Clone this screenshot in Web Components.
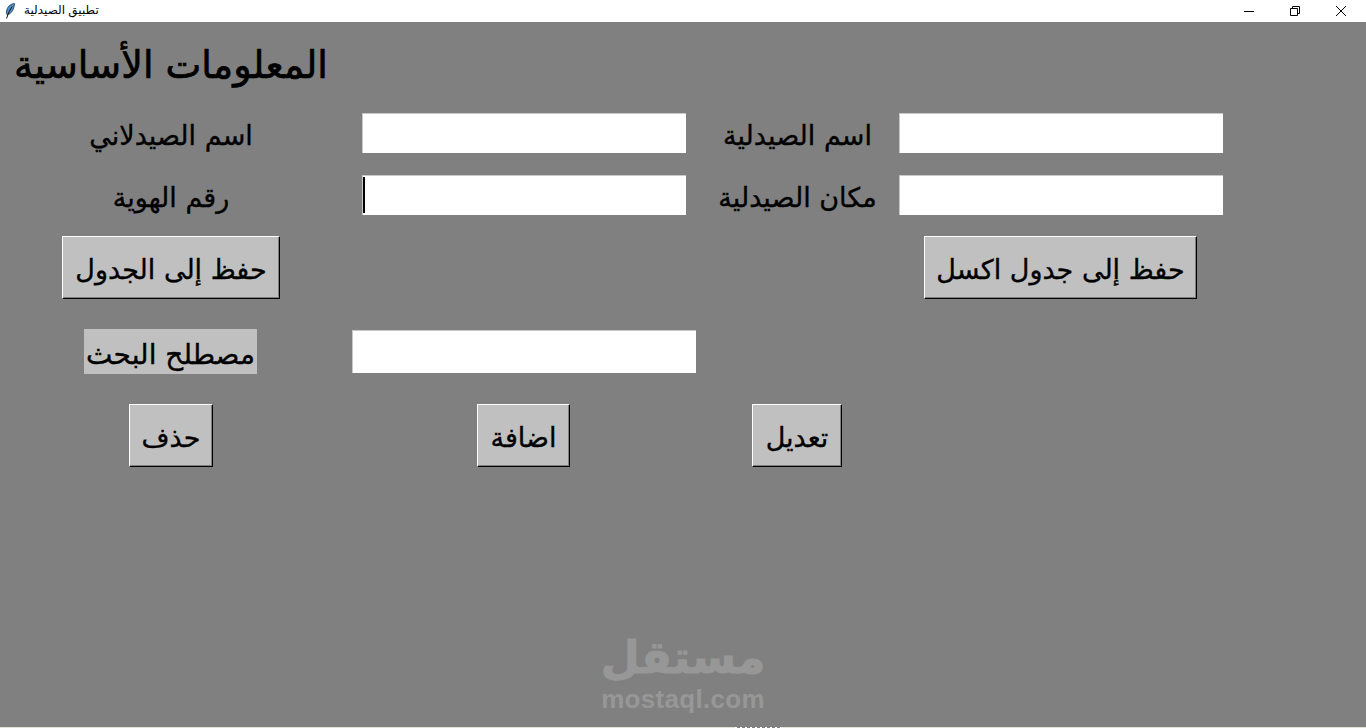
<!DOCTYPE html>
<html lang="ar">
<head>
<meta charset="utf-8">
<title>تطبيق الصيدلية</title>
<style>
    html, body { margin: 0; height: 100%; overflow: hidden; background: #808080; }
    body { font-family: "DejaVu Sans", sans-serif; }
</style>
</head>
<body>
<win-app>
    <win-titlebar slot="bar">تطبيق الصيدلية</win-titlebar>

    <pharmacy-form>
        <tk-label class="title" big>المعلومات الأساسية</tk-label>

        <tk-label class="c0 r1">اسم الصيدلاني</tk-label>
        <tk-entry class="c1 r1"></tk-entry>
        <tk-label class="c2 r1">اسم الصيدلية</tk-label>
        <tk-entry class="c3 r1"></tk-entry>

        <tk-label class="c0 r2">رقم الهوية</tk-label>
        <tk-entry class="c1 r2" focused></tk-entry>
        <tk-label class="c2 r2">مكان الصيدلية</tk-label>
        <tk-entry class="c3 r2"></tk-entry>

        <tk-button class="c0 r3" style="--w:218px">حفظ إلى الجدول</tk-button>
        <tk-button class="c3 r3" style="--w:273px;margin-left:-1px">حفظ إلى جدول اكسل</tk-button>

        <tk-label class="c0 r4" filled>مصطلح البحث</tk-label>
        <tk-entry class="c1 r4" wide></tk-entry>

        <tk-button class="c0 r5" style="--w:84px">حذف</tk-button>
        <tk-button class="c1 r5" style="--w:93px;margin-left:-1px">اضافة</tk-button>
        <tk-button class="c2 r5" style="--w:90px;margin-left:-1px">تعديل</tk-button>
    </pharmacy-form>

    <mostaql-mark slot="mark"></mostaql-mark>
</win-app>

<script>
// window shell: title bar on top, client area below, status sliver at the bottom
class WinApp extends HTMLElement {
    constructor() {
        super();
        this.attachShadow({ mode: 'open' });
        this.shadowRoot.innerHTML = `
            <style>
                :host { display: flex; flex-direction: column; height: 728px; position: relative; background: #808080; }
                .client { flex: 1; min-height: 0; }
                .edge { height: 1px; background: #e4e2d8; display: flex; }
                .edge i {
                    width: 46px;
                    margin-left: 735px;
                    background: repeating-linear-gradient(90deg, #fff 0 2px, #808080 2px 5px);
                }
            </style>
            <slot name="bar"></slot>
            <div class="client"><slot></slot></div>
            <slot name="mark"></slot>
            <div class="edge"><i></i></div>
        `;
    }
}

class WinTitlebar extends HTMLElement {
    constructor() {
        super();
        this.attachShadow({ mode: 'open' });
        this.shadowRoot.innerHTML = `
            <style>
                :host {
                    display: flex;
                    align-items: center;
                    height: 22px;
                    padding-right: 2px;
                    background: #fff;
                    color: #000;
                    font: 12px "Liberation Sans", "DejaVu Sans", sans-serif;
                }
                .icon { width: 10px; height: 16px; margin: 0 9px 0 5px; flex: none; }
                .text { direction: rtl; position: relative; top: -1px; }
                .spacer { flex: 1; }
                .btn { width: 46px; height: 22px; display: flex; align-items: center; justify-content: center; flex: none; }
                svg { display: block; }
            </style>
            <svg class="icon" viewBox="0 0 10 16">
                <path d="M9.5 .6C5.5 .8 2.2 3.8 1.5 8.2 1.3 9.8 1.5 11 2.2 11.8 6.5 11 9.2 6 9.5 .6Z" fill="#4f8fc8" stroke="#1c3350" stroke-width=".8"/>
                <path d="M7.2 3.5C5 6.5 3 10.5 1.6 15.5" fill="none" stroke="#111" stroke-width="1"/>
            </svg>
            <span class="text"><slot></slot></span>
            <span class="spacer"></span>
            <span class="btn"><svg width="10" height="10" viewBox="0 0 10 10"><path d="M0 5.5H10" stroke="#000"/></svg></span>
            <span class="btn"><svg width="10" height="10" viewBox="0 0 10 10" fill="none" stroke="#000"><path d="M.5 2.5H7.5V9.5H.5Z"/><path d="M2.5 2.5V.5H9.5V7.5H7.5"/></svg></span>
            <span class="btn"><svg width="10" height="10" viewBox="0 0 10 10"><path d="M0 0L10 10M10 0L0 10" stroke="#000" stroke-width="1"/></svg></span>
        `;
    }
}

// the grid of the form; rows and columns follow the Tk grid of the original
class PharmacyForm extends HTMLElement {
    constructor() {
        super();
        this.attachShadow({ mode: 'open' });
        this.shadowRoot.innerHTML = `
            <style>
                :host {
                    display: grid;
                    grid-template-columns: 342px 364px 183px 344px;
                    grid-template-rows: 86px 50px 74px 71px 97px 71px;
                    justify-content: start;
                    align-content: start;
                    place-items: center;
                }
            </style>
            <slot></slot>
        `;
    }
    connectedCallback() {
        const cols = { c0: 1, c1: 2, c2: 3, c3: 4 };
        const rows = { title: 1, r1: 2, r2: 3, r3: 4, r4: 5, r5: 6 };
        for (const el of this.children) {
            el.classList.forEach(name => {
                if (cols[name]) el.style.gridColumn = cols[name];
                if (rows[name]) el.style.gridRow = rows[name];
            });
            if (el.classList.contains('title')) el.style.gridColumn = 1;
        }
    }
}

class TkLabel extends HTMLElement {
    constructor() {
        super();
        this.attachShadow({ mode: 'open' });
        this.shadowRoot.innerHTML = `
            <style>
                :host {
                    display: block;
                    direction: rtl;
                    white-space: nowrap;
                    color: #000;
                    font-size: 27px;
                    line-height: 40px;
                    padding-top: 6px;
                    -webkit-text-stroke: .35px #000;
                }
                :host([big]) { font-size: 38px; line-height: 40px; padding-top: 0; -webkit-text-stroke: .7px #000; }
                :host([filled]) {
                    background: #c0c0c0;
                    font-size: 28px;
                    width: 173px;
                    height: 45px;
                    line-height: 51px;
                    padding-top: 0;
                    margin-left: -1px;
                    text-align: center;
                }
            </style>
            <slot></slot>
        `;
    }
}

class TkEntry extends HTMLElement {
    constructor() {
        super();
        this.attachShadow({ mode: 'open' });
        this.shadowRoot.innerHTML = `
            <style>
                :host {
                    display: block;
                    box-sizing: border-box;
                    width: 324px;
                    height: 40px;
                    background: #fff;
                    border-top: 1px solid #c8c8c8;
                    border-left: 1px solid #c8c8c8;
                }
                :host([wide]) { width: 344px; height: 43px; }
                .caret { display: none; width: 2px; height: 36px; margin: 1px 0 0 0; background: #000; }
                :host([focused]) .caret { display: block; }
            </style>
            <div class="caret"></div>
        `;
    }
}

class TkButton extends HTMLElement {
    constructor() {
        super();
        this.attachShadow({ mode: 'open' });
        this.shadowRoot.innerHTML = `
            <style>
                :host {
                    display: flex;
                    align-items: center;
                    justify-content: center;
                    box-sizing: border-box;
                    width: var(--w, 100px);
                    height: 63px;
                    direction: rtl;
                    white-space: nowrap;
                    color: #000;
                    background: #c0c0c0;
                    font-size: 27px;
                    -webkit-text-stroke: .35px #000;
                    border-top: 1px solid #fff;
                    border-left: 1px solid #fff;
                    border-right: 1px solid #000;
                    border-bottom: 1px solid #000;
                    box-shadow: inset -1px -1px 0 #808080;
                    padding-top: 4px;
                }
            </style>
            <slot></slot>
        `;
    }
}

// faint site watermark that lies over the window
class MostaqlMark extends HTMLElement {
    constructor() {
        super();
        this.attachShadow({ mode: 'open' });
        this.shadowRoot.innerHTML = `
            <style>
                :host {
                    position: absolute;
                    left: 583px;
                    top: 629px;
                    width: 200px;
                    display: flex;
                    flex-direction: column;
                    align-items: center;
                    color: #979797;
                    font-weight: bold;
                    pointer-events: none;
                }
                .ar {
                    direction: rtl;
                    font-size: 45px;
                    line-height: 58px;
                    height: 55px;
                    -webkit-text-stroke: 1px #979797;
                }
                .en { font: bold 26px/30px "Liberation Sans", sans-serif; letter-spacing: .3px; }
            </style>
            <div class="ar">مستقل</div>
            <div class="en">mostaql.com</div>
        `;
    }
}

customElements.define('win-app', WinApp);
customElements.define('win-titlebar', WinTitlebar);
customElements.define('pharmacy-form', PharmacyForm);
customElements.define('tk-label', TkLabel);
customElements.define('tk-entry', TkEntry);
customElements.define('tk-button', TkButton);
customElements.define('mostaql-mark', MostaqlMark);
</script>
</body>
</html>
